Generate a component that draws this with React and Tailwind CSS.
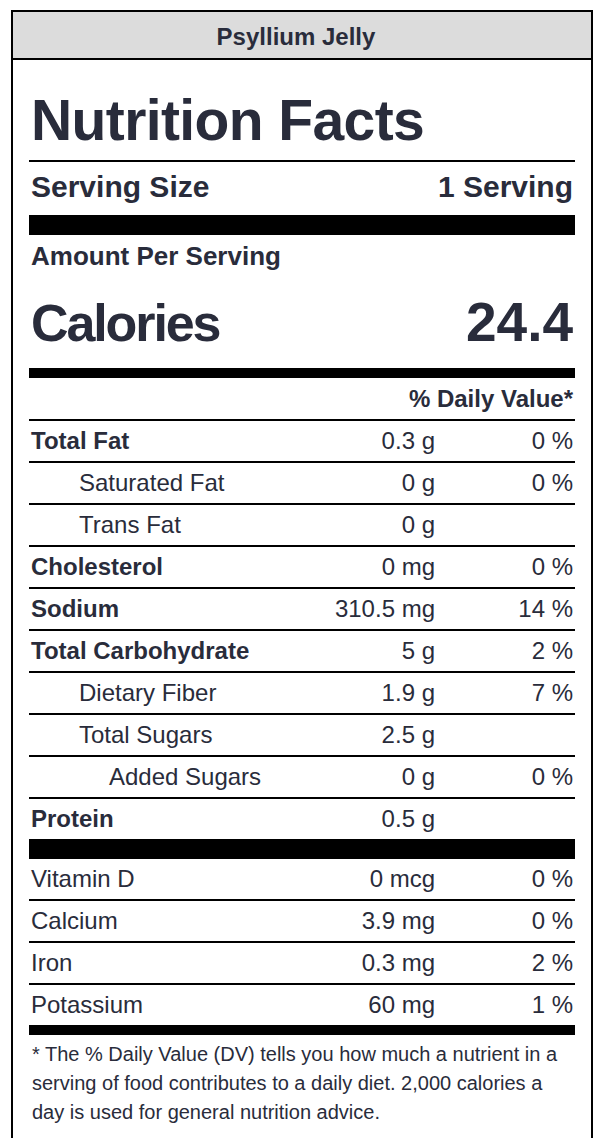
import React from 'react'

const rows = [
  { name: 'Total Fat', amount: '0.3 g', dv: '0 %', bold: true },
  { name: 'Saturated Fat', amount: '0 g', dv: '0 %', indent: 1 },
  { name: 'Trans Fat', amount: '0 g', dv: '', indent: 1 },
  { name: 'Cholesterol', amount: '0 mg', dv: '0 %', bold: true },
  { name: 'Sodium', amount: '310.5 mg', dv: '14 %', bold: true },
  { name: 'Total Carbohydrate', amount: '5 g', dv: '2 %', bold: true },
  { name: 'Dietary Fiber', amount: '1.9 g', dv: '7 %', indent: 1 },
  { name: 'Total Sugars', amount: '2.5 g', dv: '', indent: 1 },
  { name: 'Added Sugars', amount: '0 g', dv: '0 %', indent: 2 },
  { name: 'Protein', amount: '0.5 g', dv: '', bold: true },
]

const vitamins = [
  { name: 'Vitamin D', amount: '0 mcg', dv: '0 %' },
  { name: 'Calcium', amount: '3.9 mg', dv: '0 %' },
  { name: 'Iron', amount: '0.3 mg', dv: '2 %' },
  { name: 'Potassium', amount: '60 mg', dv: '1 %' },
]

function Row({ name, amount, dv, bold, indent, first }) {
  const pad = indent === 2 ? 'pl-[80px]' : indent === 1 ? 'pl-[50px]' : 'pl-[2px]'
  return (
    <div className={`flex items-center text-[24px] leading-[40px] ${first ? 'h-[40px]' : 'h-[42px] border-t-2 border-black'}`}>
      <div className={`flex-1 ${pad} ${bold ? 'font-bold' : ''}`}>{name}</div>
      <div className="w-[120px] text-right">{amount}</div>
      <div className="w-[140px] text-right pr-[2px]">{dv}</div>
    </div>
  )
}

export default function App() {
  return (
    <div className="min-h-screen bg-white pt-[10px] pl-[11px] text-[#292c3b] font-['Liberation_Sans',Arial,sans-serif]">
      <div className="w-[582px] border-2 border-black">
        <div className="h-[48px] bg-[#dcdcdc] border-b-2 border-black flex items-center justify-center pt-[4px] pr-[12px] text-[24px] font-bold">
          Psyllium Jelly
        </div>
        <div className="px-[16px]">
          <h1 className="pt-[32px] pb-[12px] pl-[2px] text-[57px] leading-[56px] font-bold tracking-[-0.6px]">Nutrition Facts</h1>
          <div className="border-t-2 border-black flex justify-between pt-[10px] pb-[13px] pl-[2px] text-[30px] leading-[30px] font-bold">
            <span>Serving Size</span>
            <span className="pr-[2px]">1 Serving</span>
          </div>
          <div className="h-[20px] bg-black" />
          <div className="pt-[8px] pl-[2px] text-[26px] leading-[26px] font-bold">Amount Per Serving</div>
          <div className="flex justify-between items-baseline pt-[26px] pb-[18px] pl-[2px] leading-[54px] font-bold">
            <span className="text-[52px] tracking-[-2.1px]">Calories</span>
            <span className="pr-[2px] text-[55px]">24.4</span>
          </div>
          <div className="h-[10px] bg-black" />
          <div className="h-[41px] flex items-center justify-end pr-[2px] text-[24px] font-bold">% Daily Value*</div>
          {rows.map((r) => (
            <Row key={r.name} {...r} />
          ))}
          <div className="h-[20px] bg-black" />
          {vitamins.map((r, i) => (
            <Row key={r.name} {...r} first={i === 0} />
          ))}
          <div className="h-[10px] bg-black" />
          <p className="pt-[5px] pb-[16px] pl-[3px] text-[20px] leading-[29px]">
            * The % Daily Value (DV) tells you how much a nutrient in a serving of food contributes to a daily diet. 2,000 calories a day is used for general nutrition advice.
          </p>
        </div>
      </div>
    </div>
  )
}
